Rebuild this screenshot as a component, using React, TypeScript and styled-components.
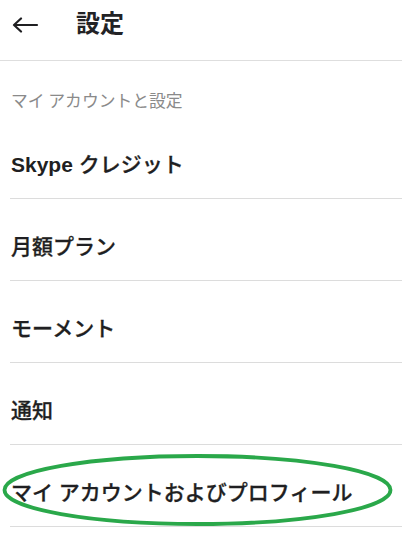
import React from "react";
import styled, { createGlobalStyle } from "styled-components";

const Global = createGlobalStyle`
  html, body { margin: 0; padding: 0; background: #ffffff; }
  body {
    font-family: "Liberation Sans", "Noto Sans CJK JP", sans-serif;
    color: #1f1f22;
  }
  * { box-sizing: border-box; }
`;

const Page = styled.div`
  width: 402px;
  min-height: 537px;
  background: #ffffff;
  overflow: hidden;
`;

const Header = styled.header`
  height: 61px;
  display: flex;
  align-items: flex-start;
  padding: 9px 0 0 12px;
  border-bottom: 1px solid #dedede;
`;

const BackButton = styled.button`
  display: flex;
  align-items: center;
  justify-content: center;
  width: 27px;
  height: 16px;
  margin-top: 8px;
  padding: 0;
  border: none;
  background: transparent;
  color: #1f1f22;
`;

const Title = styled.h1`
  margin: 0 0 0 37px;
  font-size: 24px;
  line-height: 30px;
  font-weight: 700;
  color: #232326;
`;

const SectionLabel = styled.div`
  padding: 27px 0 0 11px;
  height: 56px;
  font-size: 16.8px;
  line-height: 24px;
  color: #8a8a8a;
  font-family: "Noto Sans CJK JP", sans-serif;
`;

const List = styled.ul`
  list-style: none;
  margin: 0 0 0 10px;
  padding: 0;
`;

const Row = styled.li`
  position: relative;
  height: 82px;
  padding: 33px 0 0 1px;
  border-bottom: 1px solid #dcdcdc;
  font-size: 21px;
  line-height: 30px;
  font-weight: 500;
  color: #1f1f22;
  -webkit-text-stroke: 0.28px #1f1f22;
`;

const Latin = styled.span`
  font-family: "Liberation Sans", sans-serif;
  font-weight: 700;
  -webkit-text-stroke: 0;
`;

const Highlight = styled.svg`
  position: absolute;
  left: -8px;
  top: 9px;
  width: 391px;
  height: 72px;
  pointer-events: none;
  overflow: visible;
`;

const items: React.ReactNode[] = [
  <>
    <Latin>Skype</Latin> クレジット
  </>,
  "月額プラン",
  "モーメント",
  "通知",
];

export default function App() {
  return (
    <Page>
      <Global />
      <Header>
        <BackButton aria-label="戻る">
          <svg width="27" height="16" viewBox="0 0 27 16" fill="none">
            <path
              d="M2 8H25M9 1.5L2 8L9 14.5"
              stroke="currentColor"
              strokeWidth="2.2"
              strokeLinecap="round"
              strokeLinejoin="round"
            />
          </svg>
        </BackButton>
        <Title>設定</Title>
      </Header>
      <SectionLabel>マイ アカウントと設定</SectionLabel>
      <List>
        {items.map((it, i) => (
          <Row key={i}>{it}</Row>
        ))}
        <Row>
          マイ アカウントおよびプロフィール
          <Highlight viewBox="0 0 391 72">
            <ellipse
              cx="195.5"
              cy="36"
              rx="193"
              ry="34"
              fill="none"
              stroke="#2aa84a"
              strokeWidth="3.8"
            />
          </Highlight>
        </Row>
      </List>
    </Page>
  );
}
